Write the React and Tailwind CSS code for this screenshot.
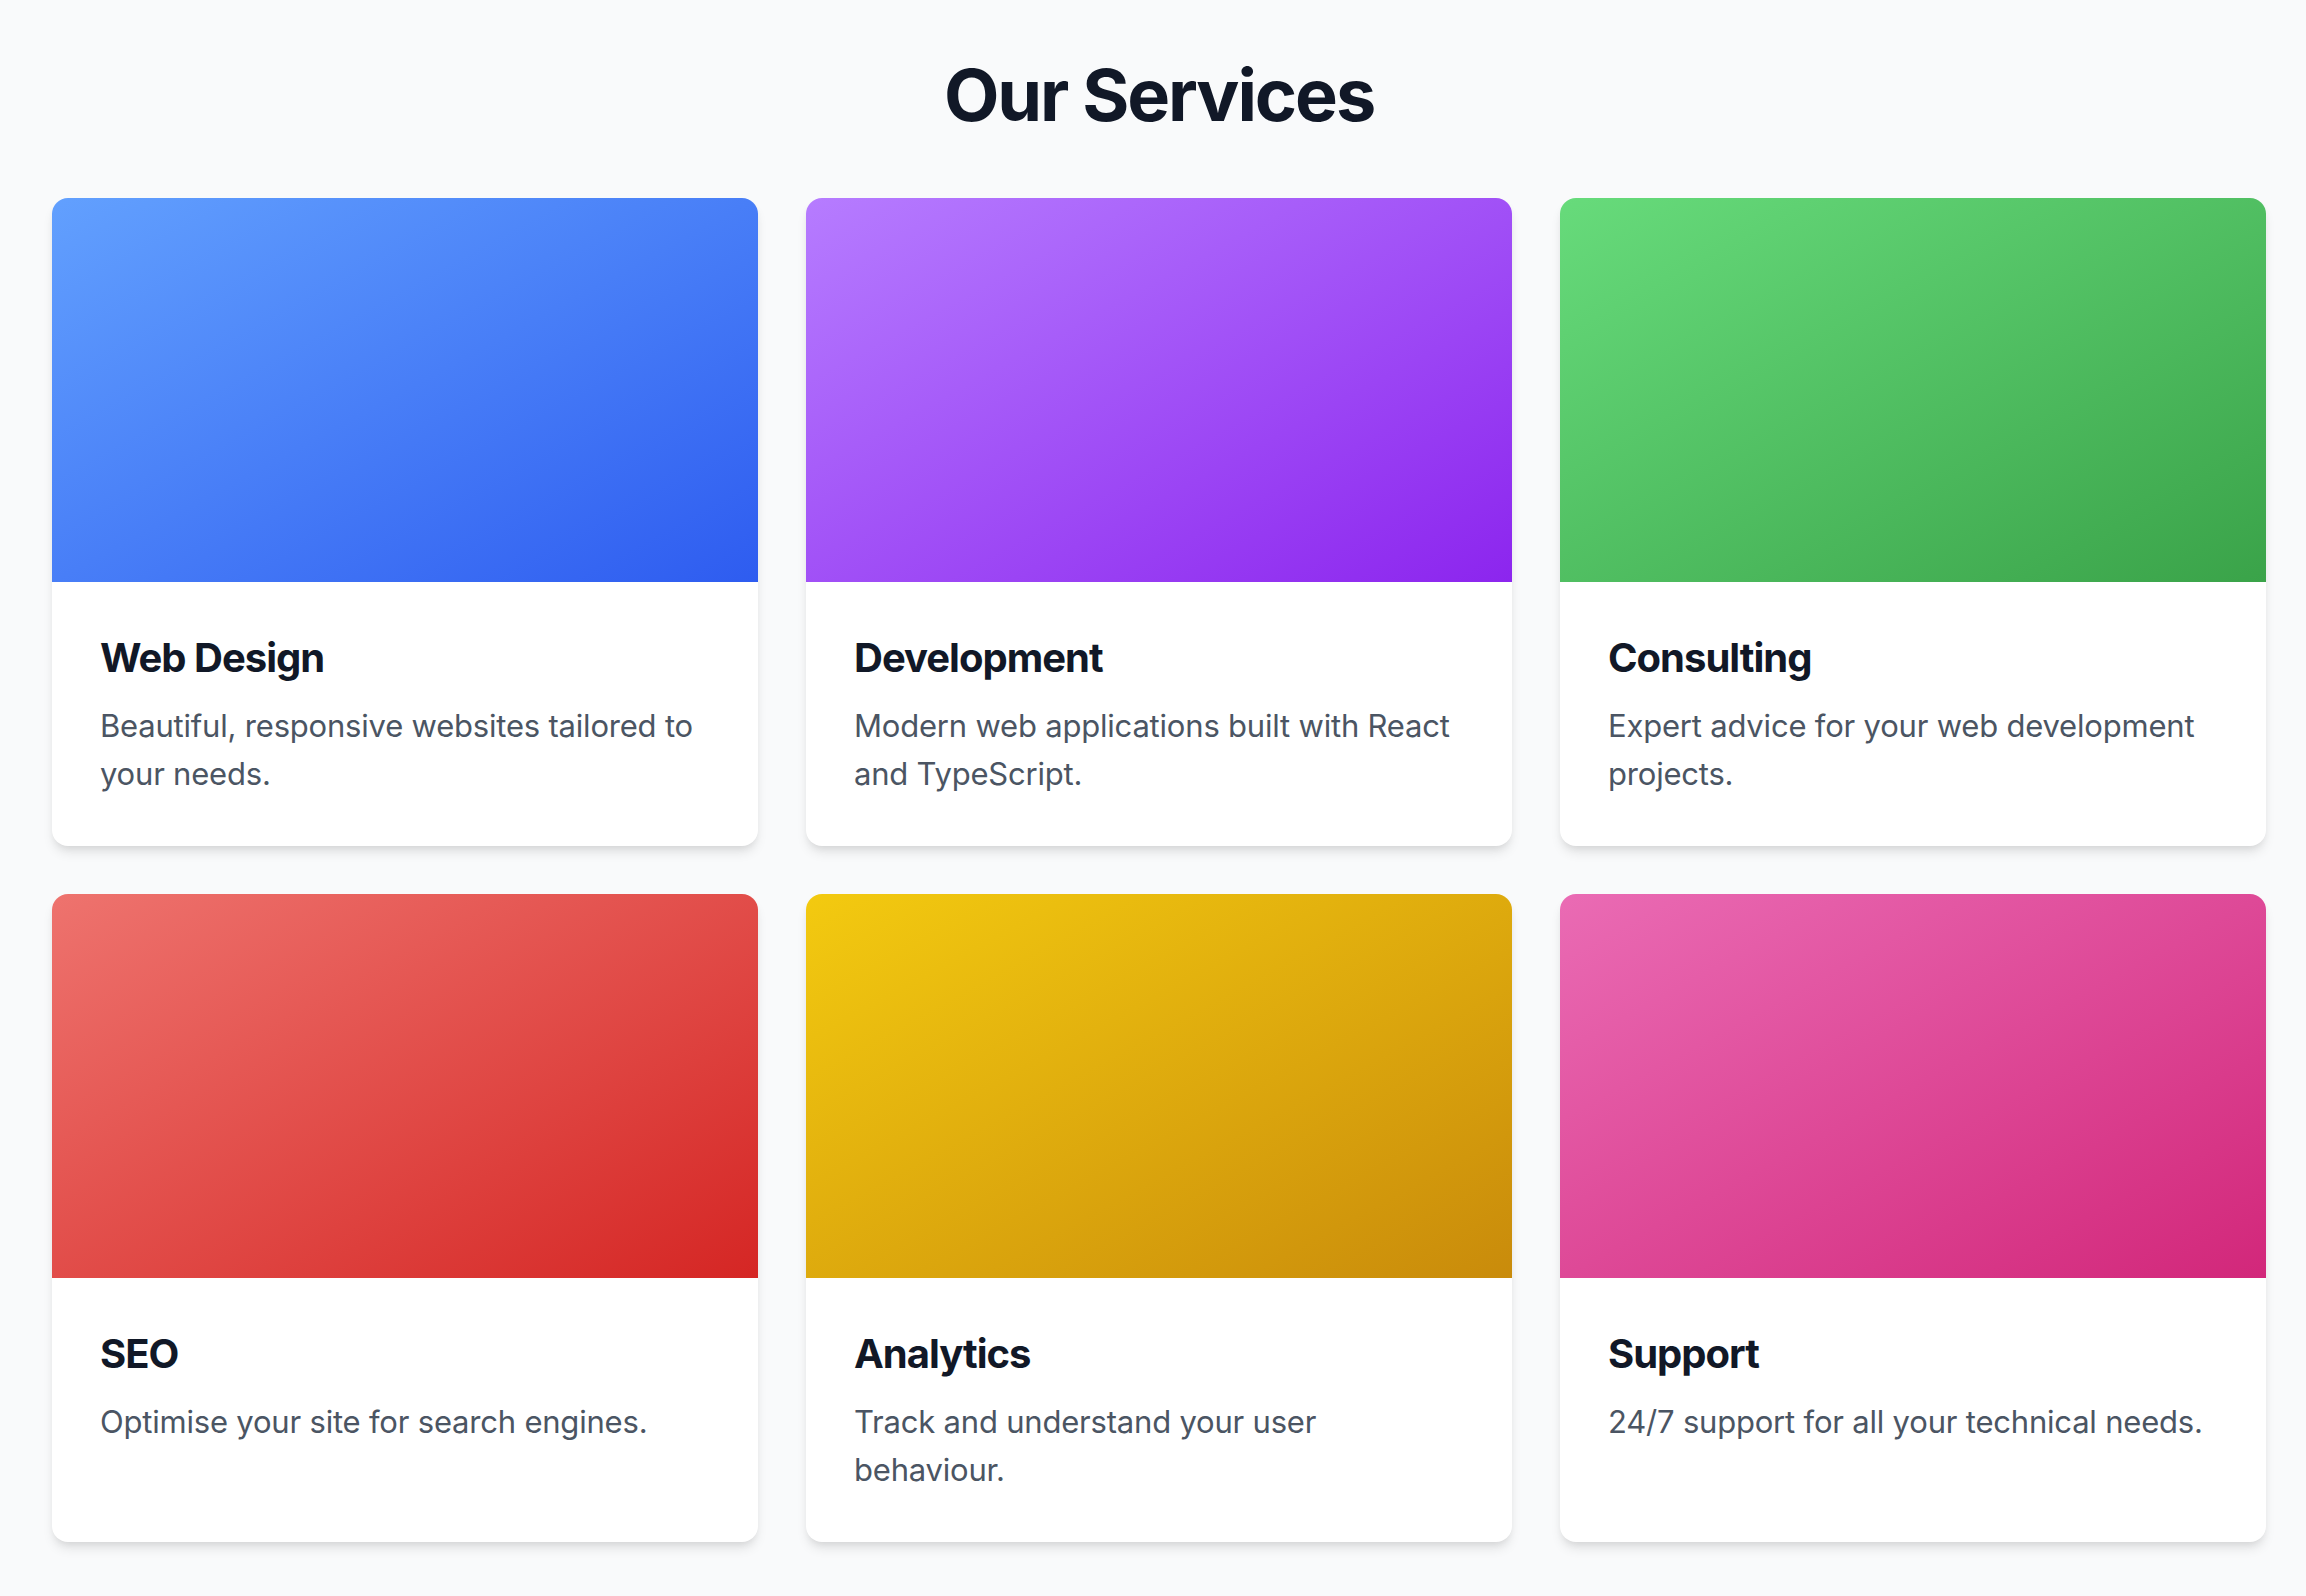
const services = [
  { title: "Web Design", desc: "Beautiful, responsive websites tailored to your needs.", bg: "bg-[linear-gradient(to_bottom_right,#62a0fe,#2e5cf0)]" },
  { title: "Development", desc: "Modern web applications built with React and TypeScript.", bg: "bg-[linear-gradient(to_bottom_right,#b67cff,#8c25ee)]" },
  { title: "Consulting", desc: "Expert advice for your web development projects.", bg: "bg-[linear-gradient(to_bottom_right,#67db7b,#3aa349)]" },
  { title: "SEO", desc: "Optimise your site for search engines.", bg: "bg-[linear-gradient(to_bottom_right,#ee736e,#d52624)]" },
  { title: "Analytics", desc: "Track and understand your user behaviour.", bg: "bg-[linear-gradient(to_bottom_right,#f3ca10,#c98b0b)]" },
  { title: "Support", desc: "24/7 support for all your technical needs.", bg: "bg-[linear-gradient(to_bottom_right,#ea6bb4,#d2277a)]" },
];

export default function App() {
  return (
    <div className="min-h-screen bg-[#f9fafb] pl-[52px] pr-[40px] pt-[55px] pb-[55px] font-['Inter','Liberation_Sans',sans-serif]">
      <h1 className="text-center text-[72px] leading-[80px] font-bold text-[#111827] tracking-[-2.1px] mb-[63px]">
        Our Services
      </h1>
      <div className="grid grid-cols-3 gap-[48px]">
        {services.map((s) => (
          <div
            key={s.title}
            className="bg-white rounded-[16px] overflow-hidden shadow-[0_8px_12px_-2px_rgba(0,0,0,0.1),0_4px_8px_-4px_rgba(0,0,0,0.1)]"
          >
            <div className={`h-[384px] ${s.bg}`} />
            <div className="p-[48px]">
              <h3 className="text-[40px] leading-[56px] font-bold text-[#111827] tracking-[-1px] mb-[16px]">
                {s.title}
              </h3>
              <p className="text-[31px] leading-[48px] text-[#4b5563] tracking-[-0.2px] min-h-[96px]">
                {s.desc}
              </p>
            </div>
          </div>
        ))}
      </div>
    </div>
  );
}
